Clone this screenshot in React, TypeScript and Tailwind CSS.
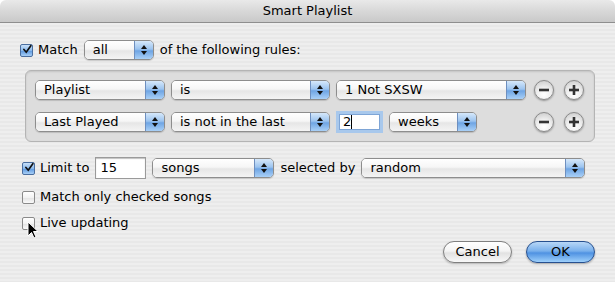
import React from "react";

const font = { fontFamily: '"DejaVu Sans", "Liberation Sans", sans-serif' };

const Arrows = () => (
  <svg width="8" height="12" viewBox="0 0 8 12">
    <path d="M4 1 L7 5 L1 5 Z" fill="#111" />
    <path d="M4 11 L7 7 L1 7 Z" fill="#111" />
  </svg>
);

const Popup = ({ label, w }: { label: string; w: string }) => (
  <div
    className={`${w} h-[20px] flex items-stretch rounded-[5px] border border-[#8d8d8d] overflow-hidden shadow-[0_1px_1px_rgba(0,0,0,0.15)] shrink-0`}
  >
    <div className="flex-1 flex items-center pl-[8px] text-[13px] bg-[linear-gradient(to_bottom,#ffffff_0%,#f6f6f6_45%,#e6e6e6_55%,#f4f4f4_100%)]">
      {label}
    </div>
    <div className="w-[19px] flex items-center justify-center border-l border-[#6e8fbf] bg-[linear-gradient(to_bottom,#d6e8fb_0%,#9cc4ef_45%,#6fa5e4_55%,#a9d0f7_100%)]">
      <Arrows />
    </div>
  </div>
);

const Check = ({ on }: { on?: boolean }) => (
  <div
    className={`w-[13px] h-[13px] rounded-[2px] border shrink-0 flex items-center justify-center ${
      on
        ? "border-[#4a6e9f] bg-[linear-gradient(to_bottom,#c9e0f8_0%,#8ab9ec_50%,#5f9ae0_55%,#a8cff6_100%)]"
        : "border-[#8a8a8a] bg-[linear-gradient(to_bottom,#ffffff_0%,#f2f2f2_50%,#e4e4e4_55%,#fafafa_100%)]"
    }`}
  >
    {on && (
      <svg width="13" height="13" viewBox="0 0 13 13" className="-mt-[2px] ml-[1px]">
        <path d="M2.5 6.5 L5.5 10 L11.5 1.5" stroke="#111" strokeWidth="2.2" fill="none" strokeLinecap="round" />
      </svg>
    )}
  </div>
);

const RoundBtn = ({ plus }: { plus?: boolean }) => (
  <div className="w-[20px] h-[20px] rounded-full border border-[#8a8a8a] bg-[radial-gradient(circle_at_50%_75%,#ffffff_0%,#eeeeee_45%,#c4c4c4_100%)] shadow-[0_1px_2px_rgba(0,0,0,0.35)] flex items-center justify-center">
    <svg width="12" height="12" viewBox="0 0 12 12">
      <rect x="1" y="4.7" width="10" height="2.6" fill="#333" />
      {plus && <rect x="4.7" y="1" width="2.6" height="10" fill="#333" />}
    </svg>
  </div>
);

const Field = ({ value, w, focus }: { value: string; w: string; focus?: boolean }) => (
  <div
    className={`${w} h-[22px] flex items-center pl-[4px] text-[13px] bg-white shrink-0 ${
      focus
        ? "border-[3px] border-[#a8c8ec] shadow-[inset_0_0_0_1px_#7ea5d6]"
        : "border border-[#9a9a9a] shadow-[inset_0_1px_1px_rgba(0,0,0,0.25)]"
    }`}
  >
    {value}
    {focus && <span className="w-[1px] h-[14px] bg-black" />}
  </div>
);

const Rule = ({
  field,
  op,
  children,
}: {
  field: string;
  op: string;
  children: React.ReactNode;
}) => (
  <div className="flex items-center h-[20px]">
    <Popup label={field} w="w-[130px]" />
    <div className="w-[6px]" />
    <Popup label={op} w="w-[159px]" />
    <div className="w-[6px]" />
    <div className="w-[190px] flex items-center gap-[6px]">{children}</div>
    <div className="ml-auto flex items-center gap-[10px] mr-[10px]">
      <RoundBtn />
      <RoundBtn plus />
    </div>
  </div>
);

export default function App() {
  return (
    <div className="w-[615px] h-[282px] relative overflow-hidden text-black" style={font}>
      <div className="h-[23px] flex items-center justify-center text-[13px] border-b border-[#8e8e8e] bg-[linear-gradient(to_bottom,#e9e9e9_0%,#d8d8d8_50%,#c9c9c9_100%)] rounded-t-[6px]">
        Smart Playlist
      </div>
      <div className="h-[259px] bg-[repeating-linear-gradient(to_bottom,#eeeeee_0px,#eeeeee_2px,#e8e8e8_2px,#e8e8e8_4px)] pt-[17px] pl-[20px]">
        <div className="flex items-center h-[20px] text-[13px]">
          <Check on />
          <span className="ml-[5px]">Match</span>
          <div className="ml-[6px]">
            <Popup label="all" w="w-[70px]" />
          </div>
          <span className="ml-[6px]">of the following rules:</span>
        </div>

        <div className="mt-[10px] ml-[5px] w-[570px] h-[72px] rounded-[6px] border border-[#b4b4b4] bg-[#dddddd] pt-[9px] pl-[9px] flex flex-col gap-[12px] shadow-[inset_0_1px_2px_rgba(0,0,0,0.12)]">
          <Rule field="Playlist" op="is">
            <Popup label="1 Not SXSW" w="w-[190px]" />
          </Rule>
          <Rule field="Last Played" op="is not in the last">
            <Field value="2" w="w-[47px]" focus />
            <Popup label="weeks" w="w-[88px]" />
          </Rule>
        </div>

        <div className="mt-[16px] flex items-center h-[20px] text-[13px] pl-[2px]">
          <Check on />
          <span className="ml-[5px]">Limit to</span>
          <div className="ml-[6px]">
            <Field value="15" w="w-[51px]" />
          </div>
          <div className="ml-[6px]">
            <Popup label="songs" w="w-[122px]" />
          </div>
          <span className="ml-[6px]">selected by</span>
          <div className="ml-[6px]">
            <Popup label="random" w="w-[224px]" />
          </div>
        </div>

        <div className="mt-[11px] flex items-center h-[16px] text-[13px] pl-[2px]">
          <Check />
          <span className="ml-[5px]">Match only checked songs</span>
        </div>

        <div className="mt-[10px] flex items-center h-[16px] text-[13px] pl-[2px]">
          <Check />
          <span className="ml-[5px]">Live updating</span>
        </div>

        <div className="mt-[10px] flex justify-end gap-[14px] pr-[20px]">
          <div className="w-[69px] h-[22px] rounded-full border border-[#7f7f7f] flex items-center justify-center text-[13px] bg-[linear-gradient(to_bottom,#ffffff_0%,#f4f4f4_45%,#e2e2e2_55%,#f8f8f8_100%)] shadow-[0_1px_2px_rgba(0,0,0,0.25)]">
            Cancel
          </div>
          <div className="w-[69px] h-[22px] rounded-full border border-[#27508f] flex items-center justify-center text-[13px] bg-[linear-gradient(to_bottom,#b8d7f7_0%,#79b0ec_45%,#4f92e2_55%,#9ed0fb_100%)] shadow-[0_1px_2px_rgba(0,0,0,0.3)]">
            OK
          </div>
        </div>
      </div>

      <svg
        className="absolute left-[27px] top-[221px]"
        width="12"
        height="19"
        viewBox="0 0 12 19"
      >
        <path d="M1 1 L1 15 L4.5 11.5 L7 17 L9 16 L6.5 10.5 L11 10.5 Z" fill="#000" stroke="#fff" strokeWidth="1" />
      </svg>
    </div>
  );
}
